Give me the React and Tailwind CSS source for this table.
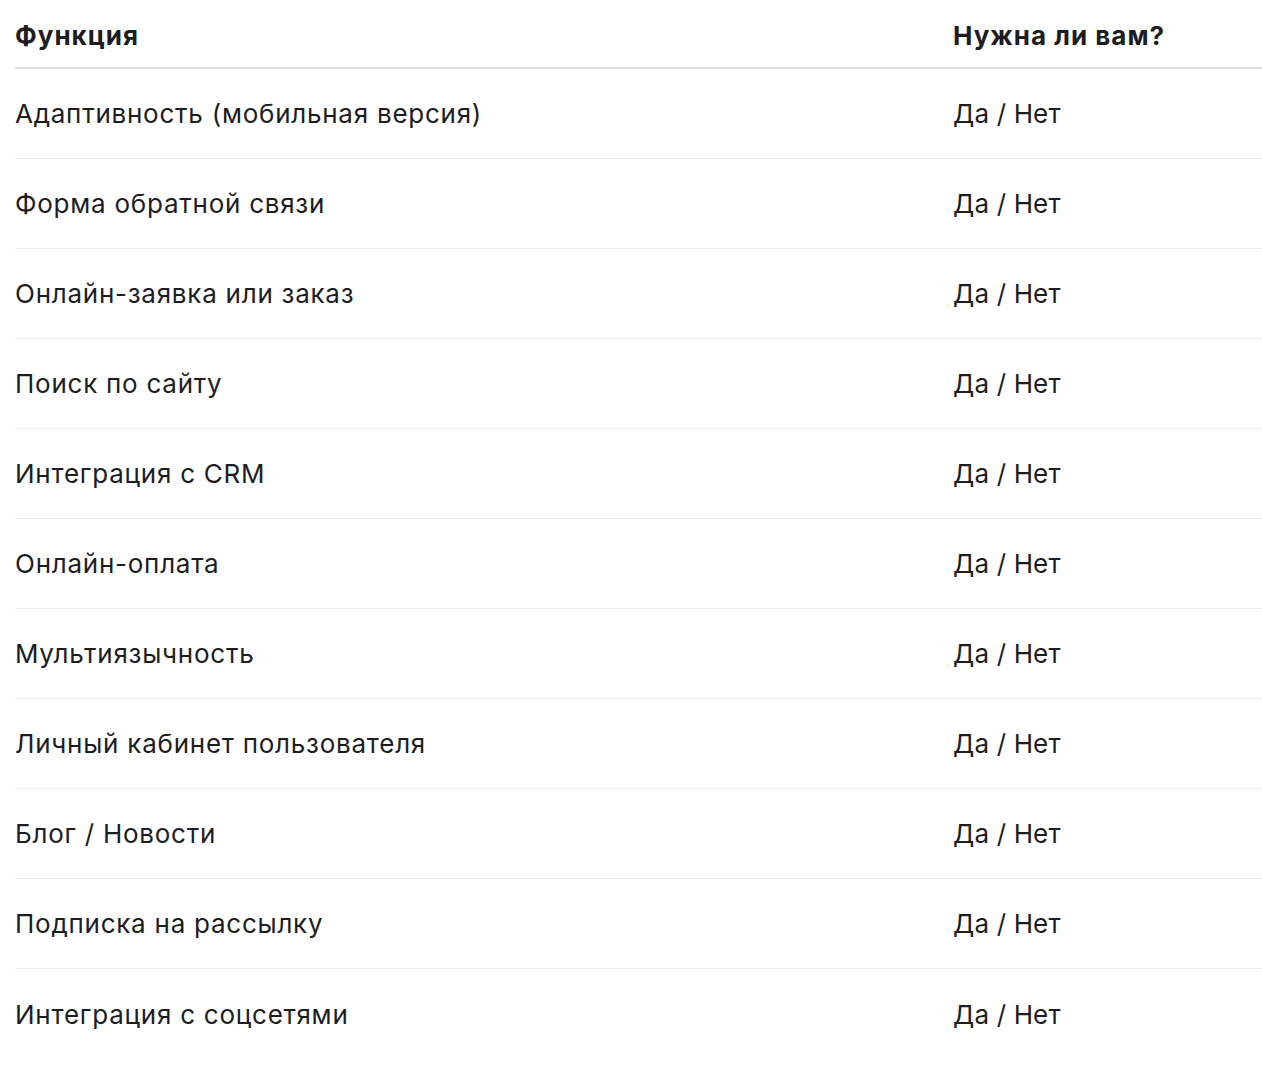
import React from "react";

const rows = [
  "Адаптивность (мобильная версия)",
  "Форма обратной связи",
  "Онлайн-заявка или заказ",
  "Поиск по сайту",
  "Интеграция с CRM",
  "Онлайн-оплата",
  "Мультиязычность",
  "Личный кабинет пользователя",
  "Блог / Новости",
  "Подписка на рассылку",
  "Интеграция с соцсетями",
];

export default function App() {
  return (
    <div
      className="min-h-[1072px] bg-white text-[#1d1d1f]"
      style={{ fontFamily: "Inter, 'Noto Sans', sans-serif" }}
    >
      <div className="ml-[15px]">
        <div className="grid grid-cols-[938px_1fr] h-[69px] border-b-2 border-[#dcdcdc] items-center pt-[4px] text-[26px] font-bold tracking-[1px]">
          <div>Функция</div>
          <div>Нужна ли вам?</div>
        </div>
        {rows.map((r, i) => (
          <div
            key={r}
            className={
              "grid grid-cols-[938px_1fr] h-[90px] items-center text-[26px] " +
              (i < rows.length - 1 ? "border-b border-[#ececec]" : "")
            }
          >
            <div className="tracking-[0.75px]">{r}</div>
            <div className="tracking-[0.15px]">Да / Нет</div>
          </div>
        ))}
      </div>
    </div>
  );
}
